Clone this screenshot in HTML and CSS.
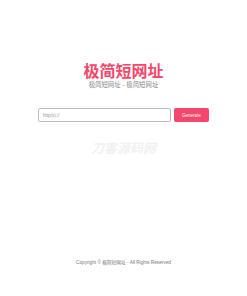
FILE: index.html
```html
<!DOCTYPE html>
<html lang="zh-CN">
<head>
<meta charset="utf-8">
<title>极简短网址</title>
<link rel="stylesheet" href="styles.css">
</head>
<body>
<main class="main">
  <h1 class="title">极简短网址</h1>
  <p class="subtitle">极简短网址 - 极简短网址</p>
  <form class="form">
    <input class="url-input" type="text" placeholder="http(s)://">
    <button class="btn" type="button">Generate</button>
  </form>
  <div class="watermark">刀客源码网</div>
</main>
<footer class="footer">Copyright © 极简短网址 - All Rights Reserved</footer>
</body>
</html>
```
FILE: styles.css
```css
html, body {
  margin: 0;
  padding: 0;
  background: #ffffff;
}
body {
  min-height: 100vh;
  display: flex;
  flex-direction: column;
  font-family: "Liberation Sans", "Noto Sans CJK SC", sans-serif;
}
.main {
  padding-top: 60px;
  display: flex;
  flex-direction: column;
  align-items: center;
}
.title {
  margin: 0;
  font-size: 16px;
  line-height: 21px;
  font-weight: 700;
  color: #f4476b;
  font-family: "Noto Sans CJK SC", sans-serif;
}
.subtitle {
  margin: 0;
  font-size: 6.4px;
  line-height: 8px;
  color: #8a8a8a;
}
.form {
  margin: 19px 0 0;
  display: flex;
  gap: 3px;
}
.url-input {
  box-sizing: border-box;
  width: 133px;
  height: 14px;
  margin: 0;
  padding: 0 4px;
  border: 1px solid #b9bcc0;
  border-radius: 2px;
  font-size: 4.5px;
  font-family: "Liberation Sans", sans-serif;
  color: #333;
  outline: none;
}
.url-input::placeholder {
  color: #999;
}
.btn {
  box-sizing: border-box;
  width: 35px;
  height: 14px;
  margin: 0;
  padding: 0;
  border: none;
  border-radius: 2px;
  background: #f4476b;
  color: #fff;
  font-size: 4.5px;
  font-family: "Liberation Sans", sans-serif;
}
.watermark {
  margin-top: 20px;
  font-size: 13px;
  line-height: 12px;
  font-weight: 700;
  font-style: italic;
  color: #f1f1f1;
  font-family: "Noto Sans CJK SC", sans-serif;
}
.footer {
  margin-top: auto;
  padding-bottom: 29px;
  text-align: center;
  font-size: 4.7px;
  line-height: 8px;
  color: #777;
}
```
